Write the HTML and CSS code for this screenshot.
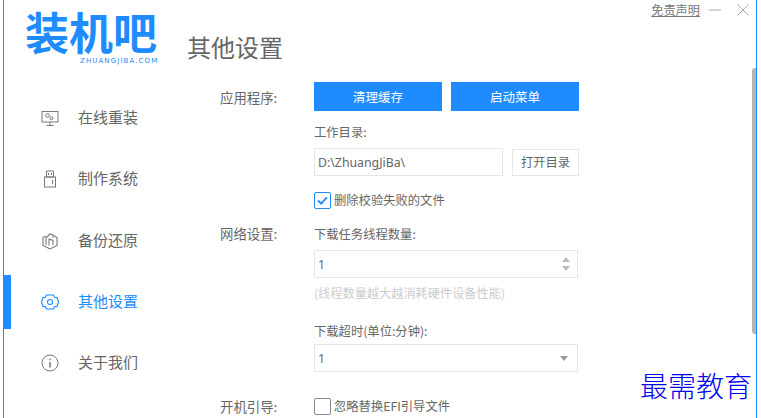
FILE: index.html
```html
<!DOCTYPE html>
<html lang="zh">
<head>
<meta charset="utf-8">
<title>其他设置</title>
<link rel="stylesheet" href="styles.css">
</head>
<body>
<div class="window">
  <aside class="sidebar">
    <div class="logo">
      <div class="logo-name">装机吧</div>
      <div class="logo-url">ZHUANGJIBA.COM</div>
    </div>
    <nav class="nav">
      <a class="nav-item">
        <svg class="nav-icon" viewBox="0 0 18 18" fill="none" stroke="#777" stroke-width="1"><rect x="1" y="2.500" width="16" height="10.500"/><circle cx="6.500" cy="6.500" r="1.800"/><circle cx="10.500" cy="9.200" r="1.500"/><path d="M9 13v3M5.500 16.500h7"/></svg>
        <span class="nav-text">在线重装</span>
      </a>
      <a class="nav-item">
        <svg class="nav-icon" viewBox="0 0 18 18" fill="none" stroke="#777" stroke-width="1"><path d="M5.500 1h7v6h-7z"/><rect x="3.500" y="7" width="11" height="10"/><path d="M7.500 3v2M10.500 3v2M11.500 10v4"/></svg>
        <span class="nav-text">制作系统</span>
      </a>
      <a class="nav-item">
        <svg class="nav-icon" viewBox="0 0 18 18" fill="none" stroke="#777" stroke-width="1.100"><path d="M13 3.500l3 2v8L9 17l-7-3.500v-8L5 4"/><path d="M5 13V6l4-4 3 1v3"/><path d="M8 13.500V7l4 1.500V13"/></svg>
        <span class="nav-text">备份还原</span>
      </a>
      <a class="nav-item is-active">
        <svg class="nav-icon" viewBox="0 0 18 18" fill="none" stroke="#1e8cff" stroke-width="1.100"><path d="M5.500 2h7l1 2.200 2.600.4L17.500 9l-1.400 4.400-2.600.4-1 2.200h-7l-1-2.200-2.600-.4L.5 9l1.400-4.400 2.600-.4z"/><circle cx="9" cy="9" r="2.500"/></svg>
        <span class="nav-text">其他设置</span>
      </a>
      <a class="nav-item">
        <svg class="nav-icon" viewBox="0 0 18 18" fill="none" stroke="#777" stroke-width="1"><circle cx="9" cy="9" r="8"/><path d="M9 8v5.500M9 4.800v1.500" stroke-width="1.500"/></svg>
        <span class="nav-text">关于我们</span>
      </a>
    </nav>
  </aside>

  <main class="main">
    <header class="topbar">
      <h1 class="title">其他设置</h1>
      <div class="controls">
        <a class="disclaimer">免责声明</a>
        <svg class="ctl-min" viewBox="0 0 12 2"><path d="M0 1h12" stroke="#aaa"/></svg>
        <svg class="ctl-close" viewBox="0 0 12 12"><path d="M.5.5l11 11M11.500.5l-11 11" stroke="#aaa"/></svg>
      </div>
    </header>

    <div class="panel">
      <section class="row row-app">
        <div class="row-label">应用程序:</div>
        <div class="row-body">
          <div class="btn-pair">
            <button class="btn-primary">清理缓存</button>
            <button class="btn-primary">启动菜单</button>
          </div>
          <div class="field-label label-dir">工作目录:</div>
          <div class="dir-row">
            <div class="input input-dir">D:\ZhuangJiBa\</div>
            <button class="btn-plain">打开目录</button>
          </div>
          <label class="check check-dir">
            <span class="box is-checked"><svg viewBox="0 0 17 17" fill="none"><path d="M3.500 8.500l3.500 3.500 6.500-7" stroke="#1e8cff" stroke-width="2.200"/></svg></span>
            <span>删除校验失败的文件</span>
          </label>
        </div>
      </section>

      <section class="row row-net">
        <div class="row-label">网络设置:</div>
        <div class="row-body">
          <div class="field-label label-threads">下载任务线程数量:</div>
          <div class="input input-wide">
            <span>1</span>
            <span class="spinner"><i class="arrow-up"></i><i class="arrow-down"></i></span>
          </div>
          <div class="hint">(线程数量越大越消耗硬件设备性能)</div>
          <div class="field-label label-timeout">下载超时(单位:分钟):</div>
          <div class="input input-wide">
            <span>1</span>
            <i class="arrow-down arrow-select"></i>
          </div>
        </div>
      </section>

      <section class="row row-boot">
        <div class="row-label">开机引导:</div>
        <div class="row-body">
          <label class="check">
            <span class="box"></span>
            <span>忽略替换EFI引导文件</span>
          </label>
        </div>
      </section>
    </div>
    <div class="scroll-thumb"></div>
  </main>
  <div class="watermark">最需教育</div>
</div>
</body>
</html>
```

FILE: styles.css
```css
* { box-sizing: border-box; }
html, body { margin: 0; padding: 0; background: #fff; }
body {
  width: 761px;
  height: 418px;
  overflow: hidden;
  font-family: "Noto Sans CJK SC", "Noto Sans", sans-serif;
  color: #666;
}
.window {
  position: relative;
  display: flex;
  width: 754px;
  height: 418px;
  margin-left: 3px;
  border-left: 1px solid #1e8cff;
  border-right: 1px solid #1e8cff;
  overflow: hidden;
}

/* sidebar */
.sidebar { flex: 0 0 183px; }
.logo { height: 91px; padding: 8px 0 0 21px; }
.logo-name {
  font-size: 44px;
  line-height: 47px;
  font-weight: 700;
  color: #1e8cff;
  white-space: nowrap;
}
.logo-url {
  margin: 2px 0 0 55px;
  font-family: "DejaVu Sans", sans-serif;
  font-size: 7px;
  line-height: 8px;
  letter-spacing: 1.100px;
  color: #1e8cff;
  white-space: nowrap;
}
.nav { display: flex; flex-direction: column; gap: 7.300px; }
.nav-item {
  display: flex;
  align-items: center;
  height: 54px;
  padding-left: 30px;
  border-left: 7px solid transparent;
  font-size: 15px;
  color: #666;
}
.nav-item.is-active { border-left-color: #1e8cff; color: #1e8cff; }
.nav-icon { flex: 0 0 18px; width: 18px; height: 18px; margin-right: 19px; }
.nav-text { padding-bottom: 3px; }

/* main */
.main { flex: 1; position: relative; min-width: 0; }
.topbar { display: flex; justify-content: space-between; height: 82px; }
.title {
  margin: 29px 0 0;
  font-size: 24px;
  line-height: 36px;
  font-weight: 400;
  color: #666;
}
.controls { display: flex; align-items: center; height: 20px; padding-right: 7px; }
.disclaimer { font-size: 12.200px; line-height: 20px; color: #777; text-decoration: underline; }
.ctl-min { width: 12px; height: 2px; margin-left: 9px; }
.ctl-close { width: 12px; height: 12px; margin-left: 16px; }

.panel { padding-left: 33px; }
.row { display: flex; }
.row-label { flex: 0 0 94px; font-size: 13.400px; line-height: 20px; color: #666; padding-top: 5px; white-space: nowrap; }
.row-body { width: 265px; }
.row-net { margin-top: 8px; }
.row-net .row-label { padding-top: 6px; }
.row-boot { margin-top: 24px; align-items: center; }
.row-boot .row-label { padding-top: 0; }

.btn-pair { display: flex; gap: 9px; }
.btn-primary {
  width: 128px;
  height: 29px;
  padding: 0;
  border: 0;
  background: #1e8cff;
  color: #fff;
  font: 400 12.500px "Noto Sans CJK SC", sans-serif;
}
.field-label { font-size: 12.300px; line-height: 20px; padding-top: 7px; color: #666; white-space: nowrap; }
.label-threads { height: 33px; }
.label-dir { margin-top: 7px; height: 30px; padding-top: 4px; }
.label-timeout { margin-top: 14px; height: 27px; padding-top: 4px; }
.dir-row { display: flex; justify-content: space-between; align-items: center; }
.input {
  display: flex;
  align-items: center;
  justify-content: space-between;
  height: 28px;
  padding: 0 5px 0 3px;
  border: 1px solid #e6e6e6;
  background: #fff;
  font-family: "Noto Sans", sans-serif;
  font-size: 12.300px;
  color: #666;
}
.input-dir { width: 189px; }
.input-wide { width: 264px; padding-right: 7px; }
.btn-plain {
  width: 67px;
  height: 27px;
  padding: 0;
  border: 1px solid #e6e6e6;
  background: #fff;
  color: #666;
  font: 400 12.300px "Noto Sans CJK SC", sans-serif;
}
.check { display: flex; align-items: center; font-size: 12.300px; color: #666; white-space: nowrap; }
.check-dir { margin-top: 15px; }
.box {
  flex: 0 0 17px;
  width: 17px;
  height: 17px;
  margin-right: 3px;
  border: 1px solid #888;
  border-radius: 2px;
}
.box svg { display: block; width: 15px; height: 15px; }
.box.is-checked { border-color: #1e8cff; }
.spinner { display: flex; flex-direction: column; gap: 4px; }
.arrow-up, .arrow-down { display: block; width: 0; height: 0; border-left: 4.500px solid transparent; border-right: 4.500px solid transparent; }
.arrow-up { border-bottom: 5px solid #bbb; }
.arrow-down { border-top: 5px solid #bbb; }
.arrow-select { border-top-color: #999; margin-right: 2px; }
.hint { margin-top: 5px; height: 20px; font-size: 12.200px; line-height: 20px; color: #ccc; white-space: nowrap; }

.scroll-thumb {
  position: absolute;
  top: 68px;
  right: 0;
  width: 4px;
  height: 266px;
  border-radius: 3px 0 0 3px;
  background: #b5b5b5;
}
.watermark {
  position: absolute;
  left: 636px;
  top: 365px;
  font-family: "Noto Sans CJK SC", serif;
  font-size: 28px;
  line-height: 40px;
  font-weight: 300;
  color: #0000f0;
  white-space: nowrap;
}
```
